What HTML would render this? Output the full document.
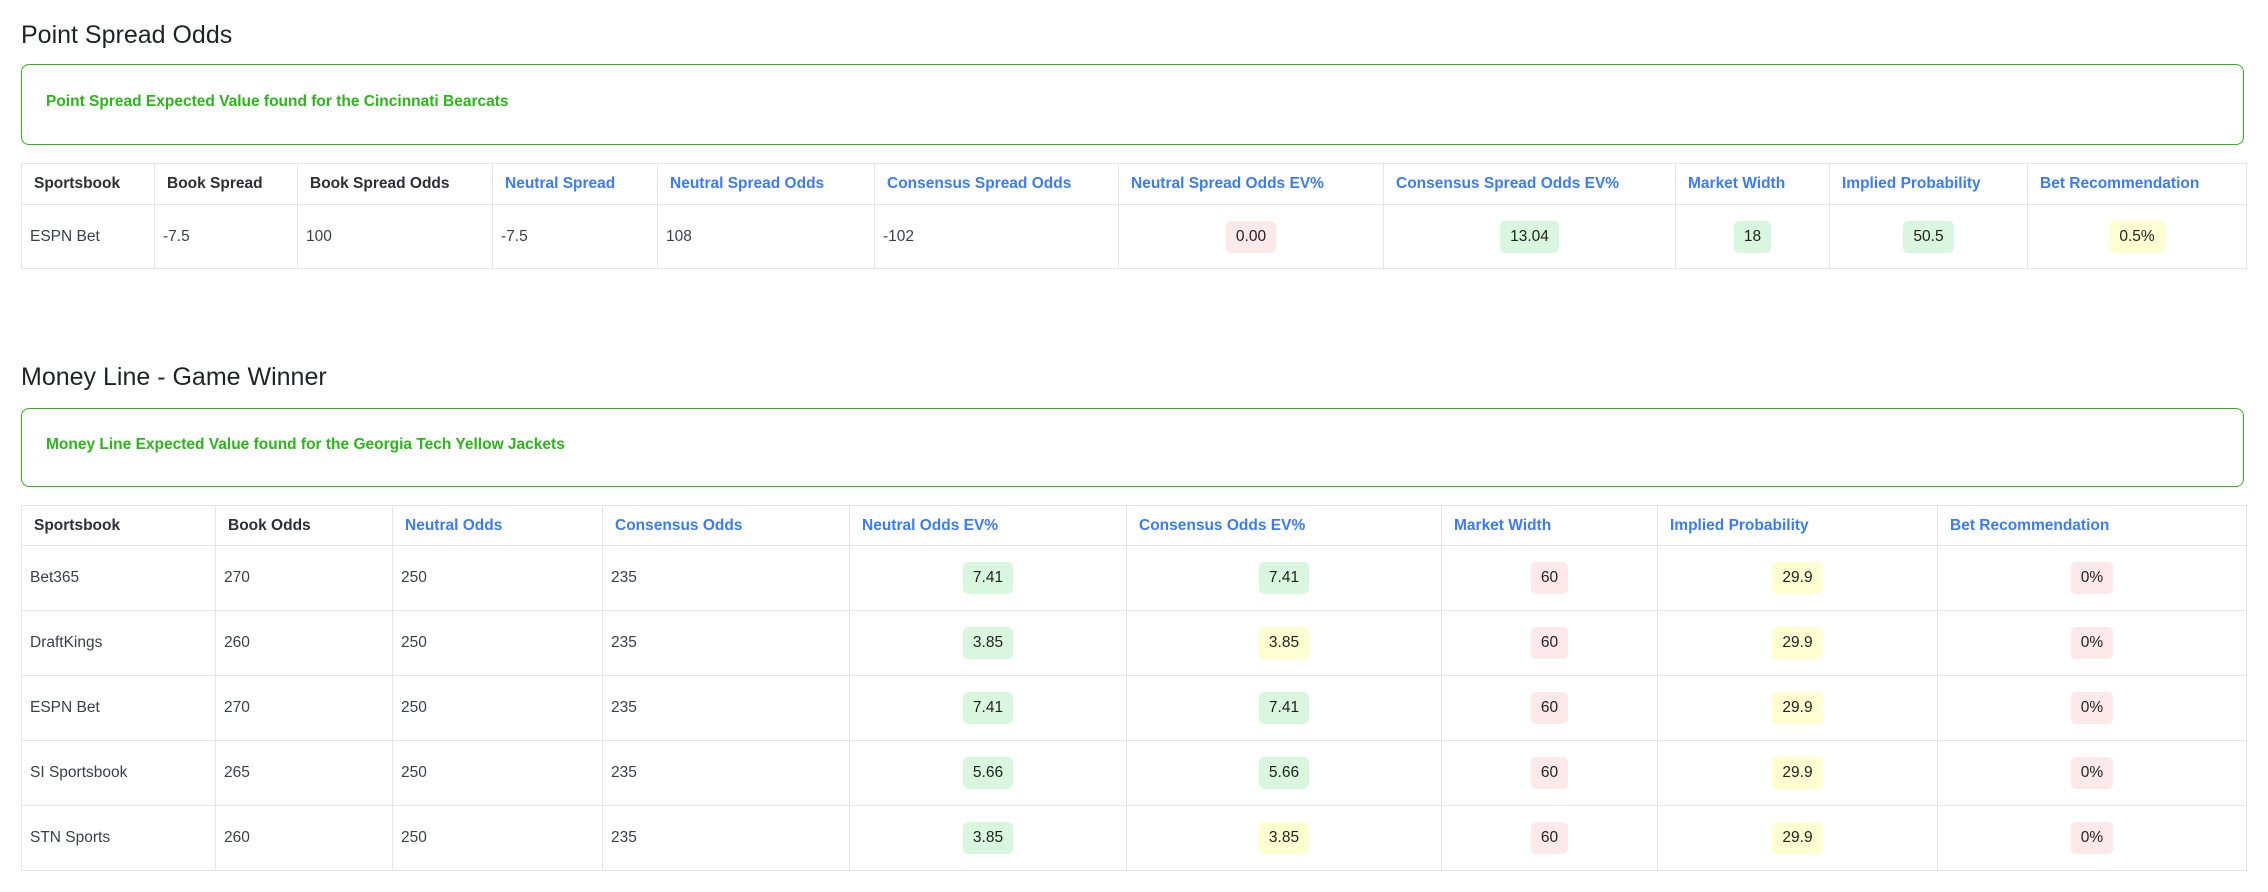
<!DOCTYPE html>
<html><head><meta charset="utf-8">
<style>
html,body{margin:0;padding:0;background:#fff;width:2268px;height:892px;overflow:hidden}
body{font-family:"Liberation Sans",sans-serif;color:#343a40;position:relative}
h2{position:absolute;left:21px;margin:0;font-weight:normal;font-size:25px;color:#1f2328;line-height:32px}
.alert{position:absolute;left:21px;width:2223px;border:1.5px solid #2fb41f;border-radius:8px;box-sizing:border-box}
.alert span{position:absolute;left:24px;color:#2cb51a;font-weight:bold;font-size:15.5px;line-height:20px}
table{position:absolute;left:21px;border-collapse:collapse;table-layout:fixed;font-size:15.5px}
td,th{border:1px solid #e3e5ea;box-sizing:border-box}
th{text-align:left;font-weight:bold;padding:0 12px;color:#2b2f36;font-size:15.5px}
th.b{color:#3b7cf2}
td{padding:0 8px;color:#3a3f46}
td.c{text-align:center}
.bd{display:inline-block;padding:0 10px;height:32px;line-height:32px;border-radius:5px;color:#222}
.g{background:#d8f7de}.r{background:#fde9ea}.y{background:#fdffd1}
</style></head><body>
<h2 style="top:19px">Point Spread Odds</h2>
<div class="alert" style="top:64px;height:81px"><span style="top:27px">Point Spread Expected Value found for the Cincinnati Bearcats</span></div>
<table style="top:163px;width:2225px">
<colgroup><col style="width:133px"><col style="width:143px"><col style="width:195px"><col style="width:165px"><col style="width:217px"><col style="width:244px"><col style="width:265px"><col style="width:292px"><col style="width:154px"><col style="width:198px"><col style="width:219px"></colgroup>
<tr style="height:41px"><th>Sportsbook</th><th>Book Spread</th><th>Book Spread Odds</th><th class="b">Neutral Spread</th><th class="b">Neutral Spread Odds</th><th class="b">Consensus Spread Odds</th><th class="b">Neutral Spread Odds EV%</th><th class="b">Consensus Spread Odds EV%</th><th class="b">Market Width</th><th class="b">Implied Probability</th><th class="b">Bet Recommendation</th></tr>
<tr style="height:64px"><td>ESPN Bet</td><td>-7.5</td><td>100</td><td>-7.5</td><td>108</td><td>-102</td><td class="c"><span class="bd r">0.00</span></td><td class="c"><span class="bd g">13.04</span></td><td class="c"><span class="bd g">18</span></td><td class="c"><span class="bd g">50.5</span></td><td class="c"><span class="bd y">0.5%</span></td></tr>
</table>
<h2 style="top:361px">Money Line - Game Winner</h2>
<div class="alert" style="top:408px;height:79px"><span style="top:26px">Money Line Expected Value found for the Georgia Tech Yellow Jackets</span></div>
<table style="top:505px;width:2225px">
<colgroup><col style="width:194px"><col style="width:177px"><col style="width:210px"><col style="width:247px"><col style="width:277px"><col style="width:315px"><col style="width:216px"><col style="width:280px"><col style="width:309px"></colgroup>
<tr style="height:40px"><th>Sportsbook</th><th>Book Odds</th><th class="b">Neutral Odds</th><th class="b">Consensus Odds</th><th class="b">Neutral Odds EV%</th><th class="b">Consensus Odds EV%</th><th class="b">Market Width</th><th class="b">Implied Probability</th><th class="b">Bet Recommendation</th></tr>
<tr style="height:65px"><td>Bet365</td><td>270</td><td>250</td><td>235</td><td class="c"><span class="bd g">7.41</span></td><td class="c"><span class="bd g">7.41</span></td><td class="c"><span class="bd r">60</span></td><td class="c"><span class="bd y">29.9</span></td><td class="c"><span class="bd r">0%</span></td></tr>
<tr style="height:65px"><td>DraftKings</td><td>260</td><td>250</td><td>235</td><td class="c"><span class="bd g">3.85</span></td><td class="c"><span class="bd y">3.85</span></td><td class="c"><span class="bd r">60</span></td><td class="c"><span class="bd y">29.9</span></td><td class="c"><span class="bd r">0%</span></td></tr>
<tr style="height:65px"><td>ESPN Bet</td><td>270</td><td>250</td><td>235</td><td class="c"><span class="bd g">7.41</span></td><td class="c"><span class="bd g">7.41</span></td><td class="c"><span class="bd r">60</span></td><td class="c"><span class="bd y">29.9</span></td><td class="c"><span class="bd r">0%</span></td></tr>
<tr style="height:65px"><td>SI Sportsbook</td><td>265</td><td>250</td><td>235</td><td class="c"><span class="bd g">5.66</span></td><td class="c"><span class="bd g">5.66</span></td><td class="c"><span class="bd r">60</span></td><td class="c"><span class="bd y">29.9</span></td><td class="c"><span class="bd r">0%</span></td></tr>
<tr style="height:65px"><td>STN Sports</td><td>260</td><td>250</td><td>235</td><td class="c"><span class="bd g">3.85</span></td><td class="c"><span class="bd y">3.85</span></td><td class="c"><span class="bd r">60</span></td><td class="c"><span class="bd y">29.9</span></td><td class="c"><span class="bd r">0%</span></td></tr>
</table>
</body></html>
